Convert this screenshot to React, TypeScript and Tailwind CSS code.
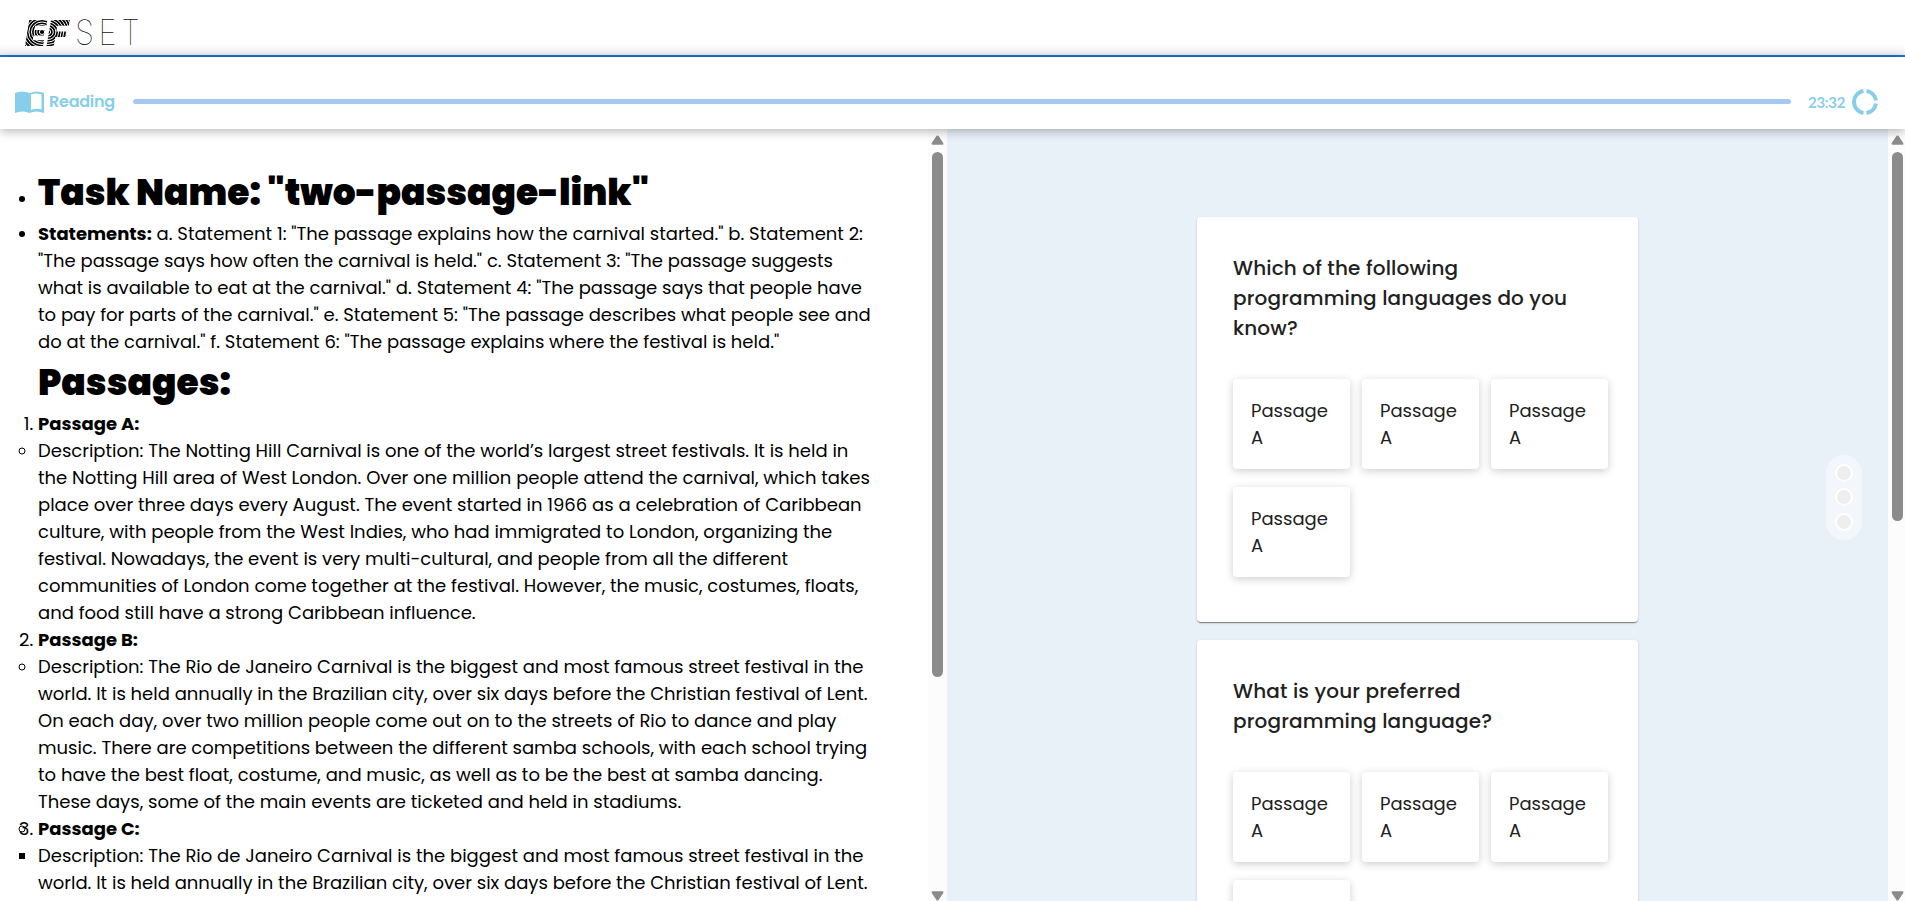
import type { ReactNode } from "react";

function ScrollBar({ thumb, width }: { thumb: string; width: string }) {
  return (
    <div className={`flex shrink-0 flex-col items-center bg-[#fcfcfc] pt-[6px] ${width}`}>
      <svg width="13" height="10" viewBox="0 0 13 10" fill="#8b8b8b">
        <path d="M5.6 .8Q6.5 0 7.400 .8L12.300 8Q12.800 9.500 11.500 9.700H1.500Q.2 9.500 .7 8Z" />
      </svg>
      <div className={`mt-[7px] w-[11px] rounded-full bg-[#8b8b8b] ${thumb}`} />
      <svg className="mt-auto" width="13" height="10" viewBox="0 0 13 10" fill="#8b8b8b">
        <path d="M5.6 9.200Q6.500 10 7.400 9.200L12.300 2Q12.800 .5 11.500 .3H1.500Q.2 .5 .7 2Z" />
      </svg>
    </div>
  );
}

function Option() {
  return (
    <div className="h-[90px] rounded-[4px] bg-white p-[18px] text-[18px] leading-[27px] shadow-[0_2px_8px_rgba(0,0,0,0.2)]">
      Passage A
    </div>
  );
}

function Question({ children }: { children: ReactNode }) {
  return (
    <section className="w-[441px] shrink-0 rounded-[4px] bg-white px-[36px] pt-[36px] pb-[45px] text-[#212121] shadow-[0_2px_1px_-1px_rgba(0,0,0,0.28),0_1px_1px_rgba(0,0,0,0.2),0_1px_3px_rgba(0,0,0,0.12)]">
      <h2 className="w-[350px] text-[20px] leading-[30px] font-medium tracking-[0.15px]">{children}</h2>
      <div className="mt-[36px] grid grid-cols-[117px_117px_117px] gap-x-[12px] gap-y-[18px]">
        <Option />
        <Option />
        <Option />
        <Option />
      </div>
    </section>
  );
}

function Rings({ id, cx }: { id: string; cx: number }) {
  const radii = Array.from({ length: 11 }, (_, i) => 2.5 + i * 2.5);
  return (
    <mask id={id} maskUnits="userSpaceOnUse" x="0" y="0" width="130" height="44">
      <rect width="130" height="44" fill="#fff" />
      {radii.map((r) => (
        <ellipse key={r} cx={cx} cy="19" rx={r * 1.05} ry={r} fill="none" stroke="#000" strokeWidth="1" />
      ))}
    </mask>
  );
}

function Logo() {
  return (
    <svg className="overflow-visible" width="130" height="44" viewBox="0 0 130 44" fontFamily="Inter, sans-serif">
      <defs>
        <Rings id="rings-e" cx={22} />
        <Rings id="rings-f" cx={28} />
      </defs>
      <g fontSize="36" fontWeight="900" fontStyle="italic">
        <g mask="url(#rings-e)">
          <text x="5" y="32.500" textLength="21.500" lengthAdjust="spacingAndGlyphs">E</text>
        </g>
        <g mask="url(#rings-f)">
          <text x="26.500" y="32.500" textLength="21.500" lengthAdjust="spacingAndGlyphs">F</text>
        </g>
      </g>
      <g fontSize="35" fontWeight="100" fill="#111">
        <text x="55" y="32" textLength="19" lengthAdjust="spacingAndGlyphs">S</text>
        <text x="78.500" y="32" textLength="18" lengthAdjust="spacingAndGlyphs">E</text>
        <text x="101.500" y="32" textLength="18" lengthAdjust="spacingAndGlyphs">T</text>
      </g>
    </svg>
  );
}

const RIO_INTRO =
  "Description: The Rio de Janeiro Carnival is the biggest and most famous street festival in the world. It is held annually in the Brazilian city, over six days before the Christian festival of Lent. On each day, over two million people come out on to the streets of Rio to dance and play music. There are competitions between the different samba schools, with each school trying to have the best float, costume, and music, as well as to be the best at samba dancing. These days, some of the main events are ticketed and held in stadiums.";

export default function App() {
  return (
    <div className="flex h-[901px] w-[1905px] flex-col overflow-hidden bg-white font-[Poppins,Inter,sans-serif] text-black">
      <header className="flex h-[57px] shrink-0 border-b-2 border-[#1976d2] bg-linear-to-b from-white from-80% to-[#f0f0f0] pt-[13px] pl-[20px]">
        <Logo />
      </header>
      <div className="z-10 flex h-[72px] shrink-0 items-center bg-white pt-[17px] pl-[15px] text-[#87ceeb] shadow-[0_2px_10px_rgba(0,0,0,0.3)]">
        <svg className="mt-px" width="29" height="23" viewBox="0 0 29 23" fill="currentColor">
          <path d="M0 2Q7-1 14.500 2Q22-1 29 2V22Q21 19 14.500 22Q8 19 0 22ZM16 3.500V19Q21 17 26.500 18.500V3.500Q21 1.500 16 3.500Z" fillRule="evenodd" />
        </svg>
        <div className="mt-px ml-[5px] w-[66px] text-[16px] font-semibold tracking-[-0.25px]">Reading</div>
        <div className="ml-[18px] h-[5px] w-[1658px] rounded-full bg-[#a5c8ee]" />
        <div className="ml-[17px] w-[38px] font-['Lato',sans-serif] text-[15px] leading-[24px] font-bold tracking-[-0.3px]">23:32</div>
        <svg className="mt-px ml-[6px]" width="26" height="26" viewBox="0 0 26 26" fill="none" stroke="currentColor" strokeWidth="4">
          <path d="M14.500 2.100A11 11 0 0 1 23.900 11.500M23.900 14.500A11 11 0 0 1 14.500 23.900M11.500 23.900A11 11 0 0 1 11.500 2.100" />
        </svg>
      </div>

      <main className="flex min-h-0 flex-1">
        <article className="w-[928px] shrink-0 overflow-hidden pt-[37px] pr-[55px] pl-[38px] text-[18px] leading-[27px]">
          <ul className="list-disc">
            <li>
              <h1 className="text-[36px] leading-[54px] font-black">Task Name: "two-passage-link"</h1>
            </li>
            <li>
              <b>Statements:</b> a. Statement 1: "The passage explains how the carnival started." b. Statement 2: "The
              passage says how often the carnival is held." c. Statement 3: "The passage suggests what is available to
              eat at the carnival." d. Statement 4: "The passage says that people have to pay for parts of the
              carnival." e. Statement 5: "The passage describes what people see and do at the carnival." f. Statement 6:
              "The passage explains where the festival is held."
            </li>
          </ul>
          <h1 className="mt-px text-[36px] leading-[54px] font-black">Passages:</h1>
          <ol className="list-decimal">
            <li>
              <b>Passage A:</b>
              <ul className="list-[circle]">
                <li>
                  Description: The Notting Hill Carnival is one of the world’s largest street festivals. It is held in
                  the Notting Hill area of West London. Over one million people attend the carnival, which takes place
                  over three days every August. The event started in 1966 as a celebration of Caribbean culture, with
                  people from the West Indies, who had immigrated to London, organizing the festival. Nowadays, the
                  event is very multi-cultural, and people from all the different communities of London come together at
                  the festival. However, the music, costumes, floats, and food still have a strong Caribbean influence.
                </li>
              </ul>
            </li>
            <li>
              <b>Passage B:</b>
              <ul className="list-[circle]">
                <li>{RIO_INTRO}</li>
                <li>
                  <ol className="list-decimal" start={3}>
                    <li>
                      <b>Passage C:</b>
                      <ul className="list-[square]">
                        <li>{RIO_INTRO.slice(0, RIO_INTRO.indexOf(" On each day"))}</li>
                      </ul>
                    </li>
                  </ol>
                </li>
              </ul>
            </li>
          </ol>
        </article>
        <ScrollBar width="w-[19px]" thumb="h-[525px]" />
        <div className="relative flex w-[941px] flex-col items-center gap-[18px] overflow-hidden bg-[#e8f0f8] pt-[88px]">
          <Question>Which of the following programming languages do you know?</Question>
          <Question>What is your preferred programming language?</Question>
          <div className="absolute top-[326px] right-[26px] flex h-[85px] w-[36px] flex-col items-center rounded-full bg-[#f3f7fc] pt-[9px]">
            <span className="size-[18px] rounded-full border-2 border-white bg-[#eeeeee]" />
            <span className="mt-[6px] size-[18px] rounded-full border-2 border-white bg-[#eeeeee]" />
            <span className="mt-[7px] size-[18px] rounded-full border-2 border-white bg-[#eeeeee]" />
          </div>
        </div>
        <ScrollBar width="w-[17px] pl-[2px]" thumb="h-[369px]" />
      </main>
    </div>
  );
}
